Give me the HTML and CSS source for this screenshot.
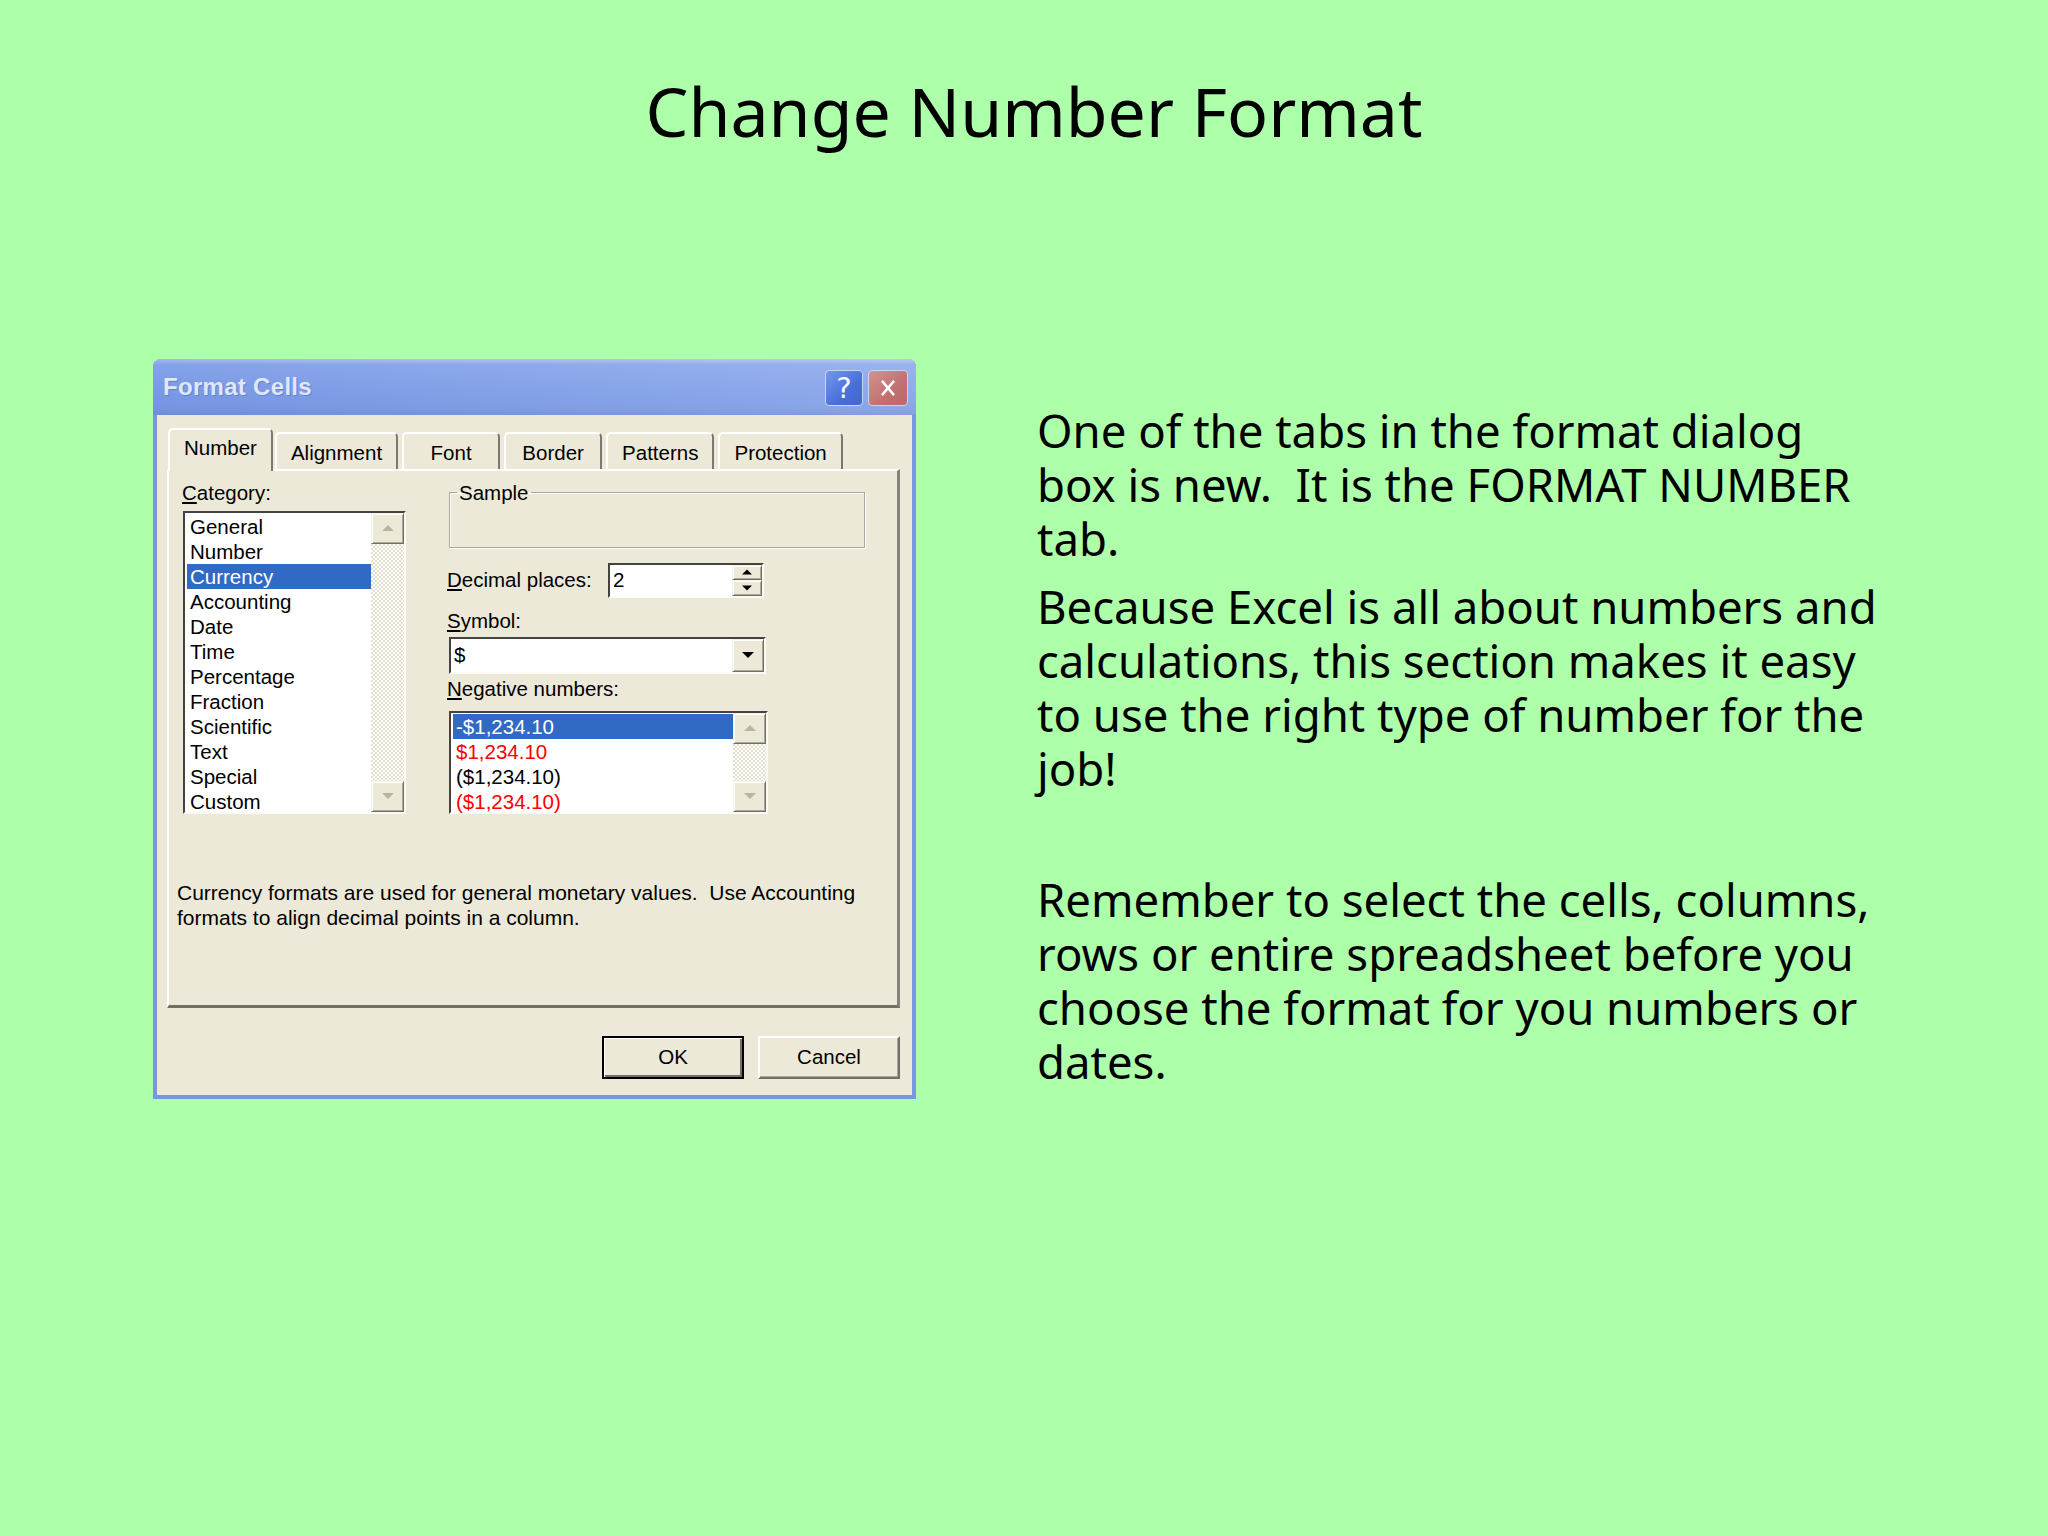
FILE: index.html
```html
<!DOCTYPE html>
<html lang="en">
<head>
    <meta charset="UTF-8" />
    <title>Change Number Format</title>
    <link rel="stylesheet" href="styles.css">
</head>
<body>
<div class="slide">
    <h1 class="title">Change Number Format</h1>

    <div class="content">
        <!-- Format Cells dialog -->
        <div class="dialog">
            <div class="titlebar">
                <span class="caption">Format Cells</span>
                <div class="caption-buttons">
                    <span class="cap-btn help">?</span>
                    <span class="cap-btn close">
                        <svg viewBox="0 0 20 20" width="22" height="22"><path d="M4.5 3.5 L15.5 16.5 M15.5 3.5 L4.5 16.5" stroke="#fff" stroke-width="2.2" fill="none"/></svg>
                    </span>
                </div>
            </div>

            <div class="client">
                <div class="tabs">
                    <span class="tab active">Number</span>
                    <span class="tab">Alignment</span>
                    <span class="tab">Font</span>
                    <span class="tab">Border</span>
                    <span class="tab">Patterns</span>
                    <span class="tab">Protection</span>
                </div>

                <div class="panel">
                    <div class="panel-grid">
                        <div class="left-col">
                            <div class="label"><u>C</u>ategory:</div>
                            <div class="listbox category-list">
                                <ul class="items">
                                    <li>General</li>
                                    <li>Number</li>
                                    <li class="selected">Currency</li>
                                    <li>Accounting</li>
                                    <li>Date</li>
                                    <li>Time</li>
                                    <li>Percentage</li>
                                    <li>Fraction</li>
                                    <li>Scientific</li>
                                    <li>Text</li>
                                    <li>Special</li>
                                    <li>Custom</li>
                                </ul>
                                <div class="vscroll">
                                    <span class="sbtn up"></span>
                                    <span class="track"></span>
                                    <span class="sbtn down"></span>
                                </div>
                            </div>
                        </div>

                        <div class="right-col">
                            <fieldset class="sample">
                                <legend>Sample</legend>
                            </fieldset>

                            <div class="decimal-row">
                                <span class="label"><u>D</u>ecimal places:</span>
                                <div class="spinbox">
                                    <span class="value">2</span>
                                    <div class="spin-btns">
                                        <span class="spin up"></span>
                                        <span class="spin down"></span>
                                    </div>
                                </div>
                            </div>

                            <div class="label symbol-label"><u>S</u>ymbol:</div>
                            <div class="combo">
                                <span class="value">$</span>
                                <span class="combo-btn"></span>
                            </div>

                            <div class="label neg-label"><u>N</u>egative numbers:</div>
                            <div class="listbox neg-list">
                                <ul class="items">
                                    <li class="selected">-$1,234.10</li>
                                    <li class="red">$1,234.10</li>
                                    <li>($1,234.10)</li>
                                    <li class="red">($1,234.10)</li>
                                </ul>
                                <div class="vscroll">
                                    <span class="sbtn up"></span>
                                    <span class="track"></span>
                                    <span class="sbtn down"></span>
                                </div>
                            </div>
                        </div>
                    </div>

                    <p class="description">
                        <span class="line">Currency formats are used for general monetary values.&nbsp; Use Accounting</span>
                        <span class="line">formats to align decimal points in a column.</span>
                    </p>
                </div>

                <div class="buttons">
                    <span class="btn default">OK</span>
                    <span class="btn">Cancel</span>
                </div>
            </div>
        </div>

        <!-- slide notes -->
        <div class="notes">
            <p>
                <span class="line">One of the tabs in the format dialog</span>
                <span class="line">box is new.&nbsp; It is the FORMAT NUMBER</span>
                <span class="line">tab.</span>
            </p>
            <p>
                <span class="line">Because Excel is all about numbers and</span>
                <span class="line">calculations, this section makes it easy</span>
                <span class="line">to use the right type of number for the</span>
                <span class="line">job!</span>
            </p>
            <p class="remember">
                <span class="line">Remember to select the cells, columns,</span>
                <span class="line">rows or entire spreadsheet before you</span>
                <span class="line">choose the format for you numbers or</span>
                <span class="line">dates.</span>
            </p>
        </div>
    </div>
</div>
</body>
</html>
```

FILE: styles.css
```css
body {
    margin: 0;
    padding: 0;
    background-color: #aeffaa;
    font-family: "Noto Sans", "Open Sans", sans-serif;
    color: #000;
}

.slide {
    width: 2048px;
    height: 1536px;
    overflow: hidden;
}

.title {
    margin: 0;
    padding: 70px 0 0 20px;
    font-size: 68px;
    font-weight: normal;
    line-height: 1.2;
    text-align: center;
}

.content {
    display: flex;
    align-items: flex-start;
    margin-top: 207px;
    padding-left: 153px;
}

.line {
    display: block;
}

/* ---------- notes ---------- */

.notes {
    margin: 44px 0 0 121px;
    font-size: 45.5px;
    line-height: 54px;
    white-space: nowrap;
}

.notes p {
    margin: 0 0 14px;
}

.notes .line {
    height: 54px;
}

.notes .remember {
    margin-top: 77px;
}

/* ---------- dialog ---------- */

.dialog {
    width: 763px;
    box-sizing: border-box;
    padding: 0 4px 4px;
    background-color: #7896e2;
    border-radius: 8px 8px 0 0;
    font-family: "Liberation Sans", Arial, sans-serif;
    font-size: 20.5px;
}

.titlebar {
    height: 56px;
    margin: 0 -4px;
    padding: 0 8px 0 10px;
    display: flex;
    align-items: center;
    justify-content: space-between;
    border-radius: 8px 8px 0 0;
    background:
        linear-gradient(to right, rgba(60, 90, 190, 0.06), rgba(255, 255, 255, 0.14)),
        linear-gradient(to bottom, #aac1f3 0, #89a6ea 10%, #7f9ee8 50%, #7898e4 88%, #6e8edb 100%);
}

.caption {
    color: #dfe7f8;
    font-weight: bold;
    font-size: 24px;
    text-shadow: 1px 1px 0 #6580cc;
    letter-spacing: 0.3px;
}

.caption-buttons {
    display: flex;
    gap: 5px;
    margin-top: 2px;
}

.cap-btn {
    height: 36px;
    box-sizing: border-box;
    border: 1px solid #c7d4f4;
    border-radius: 4px;
    display: flex;
    align-items: center;
    justify-content: center;
}

.cap-btn.help {
    width: 38px;
    background: linear-gradient(to bottom right, #7398ec, #4a6fd9 60%, #4266d2);
    color: #f4f7ff;
    font-family: "DejaVu Sans", sans-serif;
    font-size: 29px;
}

.cap-btn.close {
    width: 40px;
    background: linear-gradient(to bottom right, #d49292, #c27070 60%, #b96a6a);
}

.client {
    background-color: #ece9d8;
    padding: 13px 12px 16px 10px;
}

/* tabs */

.tabs {
    display: flex;
    align-items: flex-end;
    gap: 4px;
    height: 41px;
    padding-left: 3px;
}

.tab {
    position: relative;
    min-width: 98px;
    height: 37px;
    box-sizing: border-box;
    padding: 3px 14px 0;
    display: flex;
    align-items: center;
    justify-content: center;
    border-left: 2px solid #fff;
    border-top: 2px solid #fff;
    border-right: 2px solid #7b796e;
    border-radius: 5px 5px 0 0;
    background-color: #ece9d8;
}

.tab.active {
    height: 43px;
    margin: 0 -2px -2px -2px;
    min-width: 102px;
    z-index: 1;
    padding: 0 14px 4px;
}

.panel {
    height: 539px;
    box-sizing: border-box;
    border-left: 2px solid #fff;
    border-top: 2px solid #fff;
    border-right: 3px solid #85837a;
    border-bottom: 3px solid #716f64;
    padding: 10px 0 0 13px;
}

.panel-grid {
    display: grid;
    grid-template-columns: 224px 418px;
    column-gap: 41px;
}

.label {
    height: 24px;
    line-height: 24px;
    white-space: nowrap;
}

/* list boxes */

.listbox {
    display: flex;
    box-sizing: border-box;
    background-color: #fff;
    border-style: solid;
    border-width: 2px;
    border-color: #45433d #fbfaf5 #fbfaf5 #45433d;
}

.category-list {
    width: 223px;
    height: 303px;
    margin: 6px 0 0 1px;
}

.items {
    list-style: none;
    margin: 0;
    padding: 1px 0 0 2px;
    flex: 1;
}

.items li {
    height: 25px;
    line-height: 25px;
    padding-left: 3px;
    white-space: nowrap;
}

.items li.selected {
    background-color: #316ac5;
    color: #fff;
}

.items li.red {
    color: #ff0000;
}

.vscroll {
    width: 33px;
    display: flex;
    flex-direction: column;
}

.track {
    flex: 1;
    background: repeating-conic-gradient(#fff 0 25%, #e4e1d0 0 50%) 0 0 / 4px 4px;
}

.sbtn, .spin, .combo-btn {
    position: relative;
    box-sizing: border-box;
    background-color: #ece9d8;
    border: 1px solid;
    border-color: #f4f2e8 #716f64 #716f64 #f4f2e8;
    box-shadow: inset 1px 1px 0 #fff, inset -1px -1px 0 #aca899;
}

.sbtn {
    height: 31px;
}

.sbtn::before, .spin::before, .combo-btn::before {
    content: "";
    position: absolute;
    left: 50%;
    top: 50%;
    width: 0;
    height: 0;
    border-left: 6px solid transparent;
    border-right: 6px solid transparent;
    transform: translate(-50%, -50%);
}

.sbtn.up::before {
    border-bottom: 6px solid #b8b5a6;
}

.sbtn.down::before {
    border-top: 6px solid #b8b5a6;
}

/* right column controls */

.sample {
    width: 416px;
    height: 67px;
    box-sizing: border-box;
    margin: 0 0 0 2px;
    padding: 0;
    border: 1px solid #aca899;
    box-shadow: 1px 1px 0 #fff, inset 1px 1px 0 #fff;
}

.sample legend {
    margin-left: 7px;
    padding: 0 2px;
    line-height: 24px;
}

.decimal-row {
    display: flex;
    align-items: center;
    margin-top: 15px;
}

.decimal-row .label {
    width: 161px;
}

.spinbox, .combo {
    display: flex;
    align-items: center;
    box-sizing: border-box;
    background-color: #fff;
    border-style: solid;
    border-width: 2px;
    border-color: #45433d #fbfaf5 #fbfaf5 #45433d;
}

.spinbox {
    width: 156px;
    height: 35px;
}

.spinbox .value, .combo .value {
    flex: 1;
    padding-left: 3px;
}

.spin-btns {
    display: flex;
    flex-direction: column;
    width: 30px;
    height: 31px;
}

.spin {
    flex: 1;
}

.spin::before {
    border-left-width: 5px;
    border-right-width: 5px;
}

.spin.up::before {
    border-bottom: 5px solid #000;
}

.spin.down::before {
    border-top: 5px solid #000;
}

.symbol-label {
    margin-top: 11px;
}

.combo {
    width: 317px;
    height: 37px;
    margin: 4px 0 0 2px;
}

.combo-btn {
    width: 32px;
    height: 33px;
}

.combo-btn::before {
    border-top: 6px solid #000;
}

.neg-label {
    margin-top: 3px;
}

.neg-list {
    width: 319px;
    height: 103px;
    margin: 10px 0 0 2px;
}

.description {
    margin: 66px 0 0 -5px;
    line-height: 25px;
    white-space: nowrap;
    font-size: 21px;
}

/* dialog buttons */

.buttons {
    display: flex;
    justify-content: flex-end;
    gap: 14px;
    margin-top: 28px;
}

.btn {
    width: 142px;
    height: 43px;
    box-sizing: border-box;
    display: flex;
    align-items: center;
    justify-content: center;
    background-color: #ece9d8;
    border: 2px solid;
    border-color: #fff #716f64 #716f64 #fff;
    box-shadow: inset -1px -1px 0 #aca899;
}

.btn.default {
    border: 2px solid #000;
    box-shadow: inset 1px 1px 0 #fff, inset -2px -2px 0 #716f64;
}
```
